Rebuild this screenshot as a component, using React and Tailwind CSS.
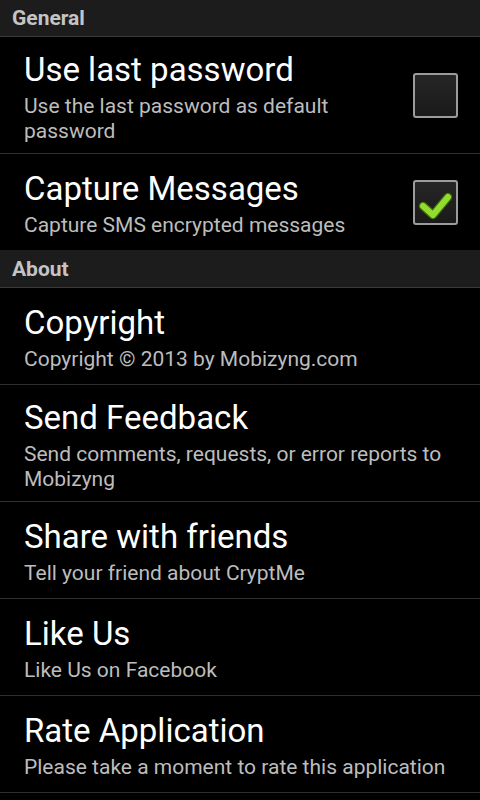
const sections = [
  {
    title: 'General',
    items: [
      { title: 'Use last password', summary: 'Use the last password as default password', checkbox: false, tall: true },
      { title: 'Capture Messages', summary: 'Capture SMS encrypted messages', checkbox: true, last: true },
    ],
  },
  {
    title: 'About',
    items: [
      { title: 'Copyright', summary: 'Copyright © 2013 by Mobizyng.com' },
      { title: 'Send Feedback', summary: 'Send comments, requests, or error reports to Mobizyng', tall: true },
      { title: 'Share with friends', summary: 'Tell your friend about CryptMe' },
      { title: 'Like Us', summary: 'Like Us on Facebook' },
      { title: 'Rate Application', summary: 'Please take a moment to rate this application' },
    ],
  },
];

function CheckBox({ checked }) {
  return (
    <div className="w-[45px] h-[45px] shrink-0 rounded-[3px] border-2 border-[#9c9c9c] bg-gradient-to-b from-[#262626] to-[#1a1a1a]">
      {checked && (
        <svg width="41" height="41" viewBox="0 0 41 41">
          <polyline points="8,24 18,33 33,15" fill="none" stroke="#3f6b0c" strokeWidth="8.5" strokeLinecap="round" strokeLinejoin="round" />
          <polyline points="8,24 18,33 33,15" fill="none" stroke="#92dc2e" strokeWidth="6" strokeLinecap="round" strokeLinejoin="round" />
        </svg>
      )}
    </div>
  );
}

function Row({ item }) {
  const h = item.tall ? 'h-[117px]' : item.last ? 'h-[96px]' : 'h-[97px]';
  return (
    <div className={`flex ${h} pl-6 pr-[22px] ${item.last ? '' : 'border-b border-[#303030]'}`}>
      <div className={`flex-1 min-w-0 self-start ${item.tall ? 'pt-[11px]' : 'pt-[13px]'}`}>
        <div className="text-[33px] leading-[44px] text-white">{item.title}</div>
        <div className="mt-[2px] text-[21px] leading-[25px] text-[#bdbdbd]">{item.summary}</div>
      </div>
      {item.checkbox !== undefined && (
        <div className="ml-4 self-center">
          <CheckBox checked={item.checkbox} />
        </div>
      )}
    </div>
  );
}

export default function App() {
  return (
    <div className="w-[480px] h-[800px] overflow-hidden bg-black" style={{ fontFamily: 'Roboto, "Noto Sans", sans-serif' }}>
      {sections.map((s, i) => (
        <div key={s.title}>
          <div className={`${i === 0 ? 'h-[37px]' : 'h-[38px] pt-[2px]'} bg-[#1c1c1c] border-b border-[#3a3a3a] px-3 flex items-center`}>
            <span className="text-[21px] font-bold text-[#c4c4c4] leading-none">{s.title}</span>
          </div>
          {s.items.map((it) => (
            <Row key={it.title} item={it} />
          ))}
        </div>
      ))}
    </div>
  );
}
